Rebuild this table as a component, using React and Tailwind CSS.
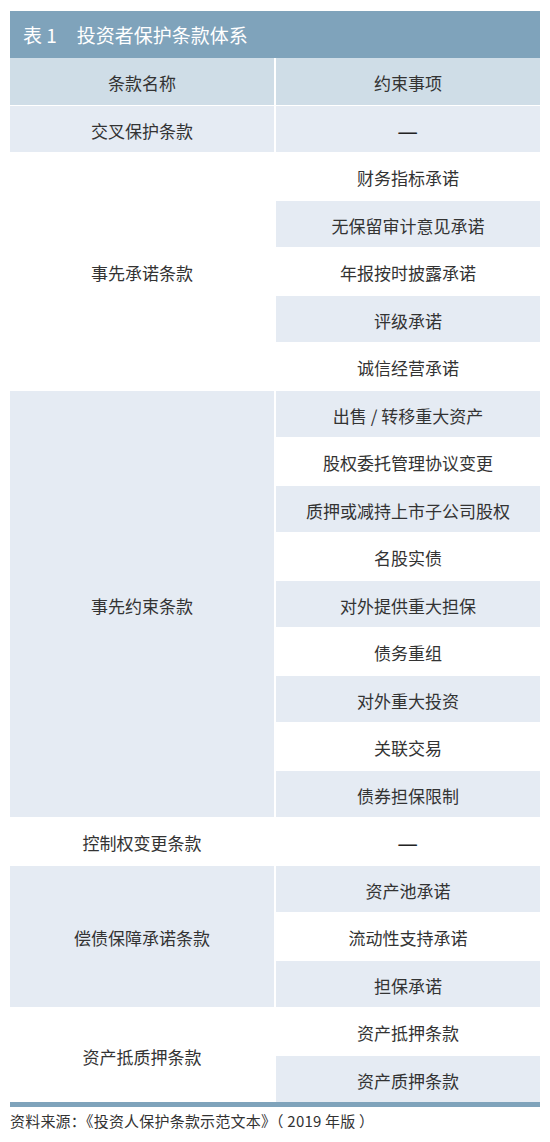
const rows = [
  { name: "交叉保护条款", items: ["—"] },
  {
    name: "事先承诺条款",
    items: ["财务指标承诺", "无保留审计意见承诺", "年报按时披露承诺", "评级承诺", "诚信经营承诺"],
  },
  {
    name: "事先约束条款",
    items: [
      "出售 / 转移重大资产",
      "股权委托管理协议变更",
      "质押或减持上市子公司股权",
      "名股实债",
      "对外提供重大担保",
      "债务重组",
      "对外重大投资",
      "关联交易",
      "债券担保限制",
    ],
  },
  { name: "控制权变更条款", items: ["—"] },
  { name: "偿债保障承诺条款", items: ["资产池承诺", "流动性支持承诺", "担保承诺"] },
  { name: "资产抵质押条款", items: ["资产抵押条款", "资产质押条款"] },
];

// row-span classes written out so Tailwind picks them up
const spans = {
  1: "row-span-1",
  2: "row-span-2",
  3: "row-span-3",
  5: "row-span-5",
  9: "row-span-9",
};

const font = { fontFamily: '"Noto Sans CJK SC", "Noto Sans", sans-serif' };

function Text({ children }) {
  if (children === "—") {
    // the source uses a wide, heavy dash
    return <span className="inline-block scale-x-[1.35] font-bold text-[#222]">—</span>;
  }
  return children;
}

export default function App() {
  let line = 0;
  const cells = [];
  rows.forEach((g, gi) => {
    const start = line;
    cells.push(
      <div
        key={"n" + gi}
        className={`col-start-1 flex items-center justify-center pt-[3px] ${spans[g.items.length]} ${
          gi % 2 === 0 ? "bg-[#e5ebf3]" : "bg-white"
        }`}
        style={{ gridRowStart: start + 2 }}
      >
        {g.name}
      </div>
    );
    g.items.forEach((it, ii) => {
      cells.push(
        <div
          key={"i" + gi + "-" + ii}
          className={`col-start-2 flex items-center justify-center pt-[3px] ${
            line % 2 === 0 ? "bg-[#e5ebf3]" : "bg-white"
          }`}
          style={{ gridRowStart: line + 2 }}
        >
          <Text>{it}</Text>
        </div>
      );
      line++;
    });
  });

  return (
    <div className="w-[550px] bg-white pt-[11px] text-[#333]" style={font}>
      <div className="mx-[10px] w-[530px]">
        <div className="flex h-[47px] items-center bg-[#7fa3bb] pl-[13px] pt-[2px] text-[19px] text-white">
          <span>表 1</span>
          <span className="ml-[20px]">投资者保护条款体系</span>
        </div>
        <div className="grid grid-cols-2 auto-rows-[46.5px] gap-x-[2px] gap-y-px text-[17px]">
          <div className="col-start-1 row-start-1 flex items-center justify-center bg-[#cfdde7] pt-[3px]">
            条款名称
          </div>
          <div className="col-start-2 row-start-1 flex items-center justify-center bg-[#cfdde7] pt-[3px]">
            约束事项
          </div>
          {cells}
        </div>
        <div className="h-[5px] bg-[#7fa3bb]" />
        <p className="mt-[4px] text-[15px] leading-[20px] tracking-[0.2px]">
          资料来源：《投资人保护条款示范文本》（ 2019 年版 ）
        </p>
      </div>
    </div>
  );
}
